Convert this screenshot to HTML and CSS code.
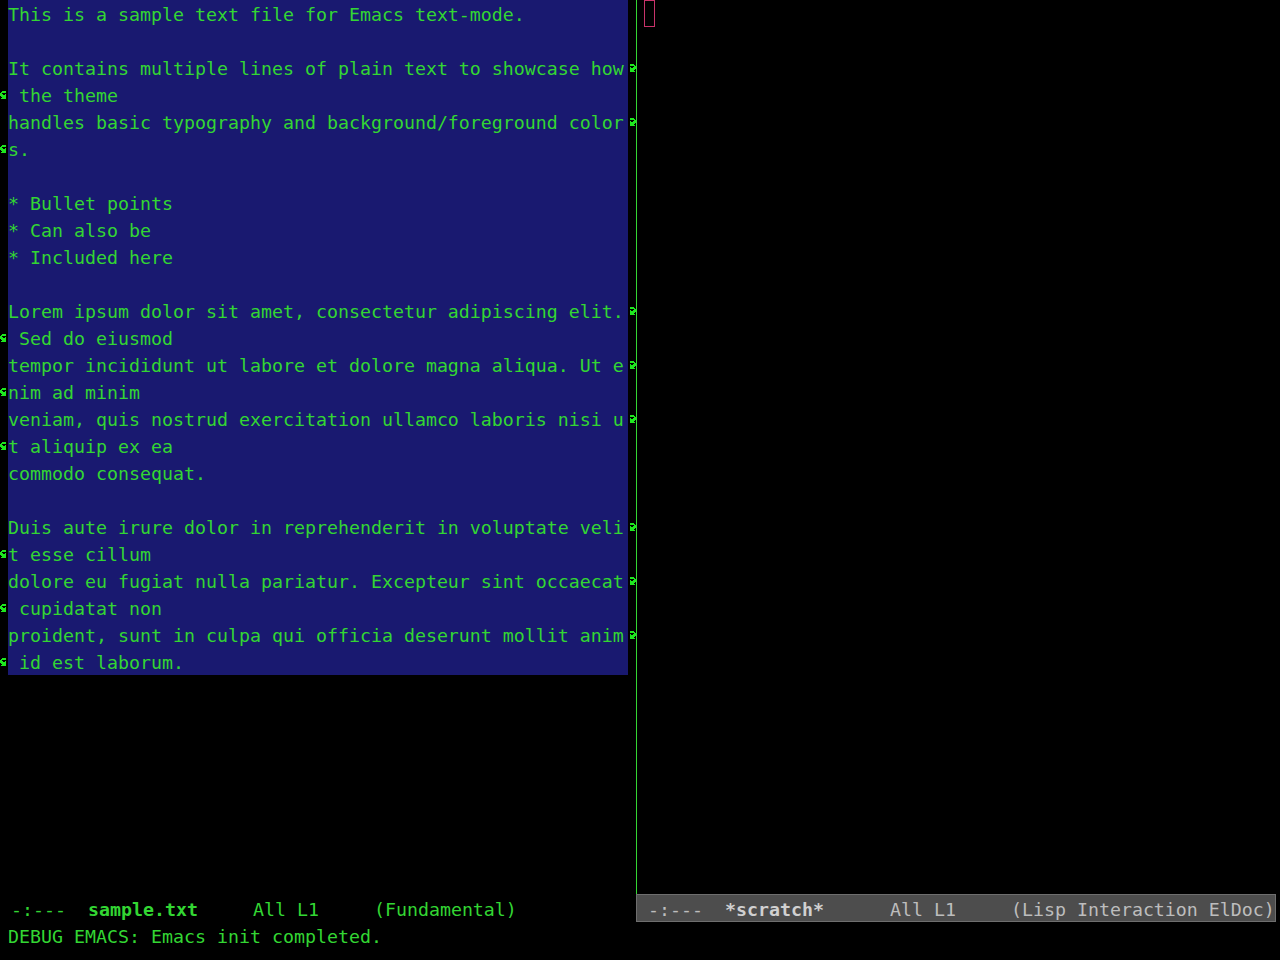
FILE: index.html
```html
<!DOCTYPE html>
<html>
<head>
<meta charset="utf-8">
<title>Emacs</title>
<link rel="stylesheet" href="styles.css">
</head>
<body>
<div class="frame">
  <div class="windows">
    <div class="win win-left">
      <div class="body">
        <div class="row"><span class="f"></span><span class="t">This is a sample text file for Emacs text-mode.</span><span class="f"></span></div>
        <div class="row"><span class="f"></span><span class="t"></span><span class="f"></span></div>
        <div class="row"><span class="f"></span><span class="t">It contains multiple lines of plain text to showcase how</span><span class="f fr"><svg width="8" height="8" viewBox="0 0 8 8"><path class="arrow" d="M2 0h4v1H2zM2 1h5v1H2zM6 2h2v1H6zM2 3h1v1H2zM5 3h3v1H5zM2 4h6v1H2zM2 5h5v1H2zM2 6h4v1H2zM2 7h5v1H2z"/></svg></span></div>
        <div class="row"><span class="f fl"><svg width="8" height="8" viewBox="0 0 8 8"><path class="arrow" d="M2 0h4v1H2zM1 1h5v1H1zM0 2h2v1H0zM0 3h3v1H0zM5 3h1v1H5zM0 4h6v1H0zM1 5h5v1H1zM2 6h4v1H2zM1 7h5v1H1z"/></svg></span><span class="t"> the theme</span><span class="f"></span></div>
        <div class="row"><span class="f"></span><span class="t">handles basic typography and background/foreground color</span><span class="f fr"><svg width="8" height="8" viewBox="0 0 8 8"><path class="arrow" d="M2 0h4v1H2zM2 1h5v1H2zM6 2h2v1H6zM2 3h1v1H2zM5 3h3v1H5zM2 4h6v1H2zM2 5h5v1H2zM2 6h4v1H2zM2 7h5v1H2z"/></svg></span></div>
        <div class="row"><span class="f fl"><svg width="8" height="8" viewBox="0 0 8 8"><path class="arrow" d="M2 0h4v1H2zM1 1h5v1H1zM0 2h2v1H0zM0 3h3v1H0zM5 3h1v1H5zM0 4h6v1H0zM1 5h5v1H1zM2 6h4v1H2zM1 7h5v1H1z"/></svg></span><span class="t">s.</span><span class="f"></span></div>
        <div class="row"><span class="f"></span><span class="t"></span><span class="f"></span></div>
        <div class="row"><span class="f"></span><span class="t">* Bullet points</span><span class="f"></span></div>
        <div class="row"><span class="f"></span><span class="t">* Can also be</span><span class="f"></span></div>
        <div class="row"><span class="f"></span><span class="t">* Included here</span><span class="f"></span></div>
        <div class="row"><span class="f"></span><span class="t"></span><span class="f"></span></div>
        <div class="row"><span class="f"></span><span class="t">Lorem ipsum dolor sit amet, consectetur adipiscing elit.</span><span class="f fr"><svg width="8" height="8" viewBox="0 0 8 8"><path class="arrow" d="M2 0h4v1H2zM2 1h5v1H2zM6 2h2v1H6zM2 3h1v1H2zM5 3h3v1H5zM2 4h6v1H2zM2 5h5v1H2zM2 6h4v1H2zM2 7h5v1H2z"/></svg></span></div>
        <div class="row"><span class="f fl"><svg width="8" height="8" viewBox="0 0 8 8"><path class="arrow" d="M2 0h4v1H2zM1 1h5v1H1zM0 2h2v1H0zM0 3h3v1H0zM5 3h1v1H5zM0 4h6v1H0zM1 5h5v1H1zM2 6h4v1H2zM1 7h5v1H1z"/></svg></span><span class="t"> Sed do eiusmod</span><span class="f"></span></div>
        <div class="row"><span class="f"></span><span class="t">tempor incididunt ut labore et dolore magna aliqua. Ut e</span><span class="f fr"><svg width="8" height="8" viewBox="0 0 8 8"><path class="arrow" d="M2 0h4v1H2zM2 1h5v1H2zM6 2h2v1H6zM2 3h1v1H2zM5 3h3v1H5zM2 4h6v1H2zM2 5h5v1H2zM2 6h4v1H2zM2 7h5v1H2z"/></svg></span></div>
        <div class="row"><span class="f fl"><svg width="8" height="8" viewBox="0 0 8 8"><path class="arrow" d="M2 0h4v1H2zM1 1h5v1H1zM0 2h2v1H0zM0 3h3v1H0zM5 3h1v1H5zM0 4h6v1H0zM1 5h5v1H1zM2 6h4v1H2zM1 7h5v1H1z"/></svg></span><span class="t">nim ad minim</span><span class="f"></span></div>
        <div class="row"><span class="f"></span><span class="t">veniam, quis nostrud exercitation ullamco laboris nisi u</span><span class="f fr"><svg width="8" height="8" viewBox="0 0 8 8"><path class="arrow" d="M2 0h4v1H2zM2 1h5v1H2zM6 2h2v1H6zM2 3h1v1H2zM5 3h3v1H5zM2 4h6v1H2zM2 5h5v1H2zM2 6h4v1H2zM2 7h5v1H2z"/></svg></span></div>
        <div class="row"><span class="f fl"><svg width="8" height="8" viewBox="0 0 8 8"><path class="arrow" d="M2 0h4v1H2zM1 1h5v1H1zM0 2h2v1H0zM0 3h3v1H0zM5 3h1v1H5zM0 4h6v1H0zM1 5h5v1H1zM2 6h4v1H2zM1 7h5v1H1z"/></svg></span><span class="t">t aliquip ex ea</span><span class="f"></span></div>
        <div class="row"><span class="f"></span><span class="t">commodo consequat.</span><span class="f"></span></div>
        <div class="row"><span class="f"></span><span class="t"></span><span class="f"></span></div>
        <div class="row"><span class="f"></span><span class="t">Duis aute irure dolor in reprehenderit in voluptate veli</span><span class="f fr"><svg width="8" height="8" viewBox="0 0 8 8"><path class="arrow" d="M2 0h4v1H2zM2 1h5v1H2zM6 2h2v1H6zM2 3h1v1H2zM5 3h3v1H5zM2 4h6v1H2zM2 5h5v1H2zM2 6h4v1H2zM2 7h5v1H2z"/></svg></span></div>
        <div class="row"><span class="f fl"><svg width="8" height="8" viewBox="0 0 8 8"><path class="arrow" d="M2 0h4v1H2zM1 1h5v1H1zM0 2h2v1H0zM0 3h3v1H0zM5 3h1v1H5zM0 4h6v1H0zM1 5h5v1H1zM2 6h4v1H2zM1 7h5v1H1z"/></svg></span><span class="t">t esse cillum</span><span class="f"></span></div>
        <div class="row"><span class="f"></span><span class="t">dolore eu fugiat nulla pariatur. Excepteur sint occaecat</span><span class="f fr"><svg width="8" height="8" viewBox="0 0 8 8"><path class="arrow" d="M2 0h4v1H2zM2 1h5v1H2zM6 2h2v1H6zM2 3h1v1H2zM5 3h3v1H5zM2 4h6v1H2zM2 5h5v1H2zM2 6h4v1H2zM2 7h5v1H2z"/></svg></span></div>
        <div class="row"><span class="f fl"><svg width="8" height="8" viewBox="0 0 8 8"><path class="arrow" d="M2 0h4v1H2zM1 1h5v1H1zM0 2h2v1H0zM0 3h3v1H0zM5 3h1v1H5zM0 4h6v1H0zM1 5h5v1H1zM2 6h4v1H2zM1 7h5v1H1z"/></svg></span><span class="t"> cupidatat non</span><span class="f"></span></div>
        <div class="row"><span class="f"></span><span class="t">proident, sunt in culpa qui officia deserunt mollit anim</span><span class="f fr"><svg width="8" height="8" viewBox="0 0 8 8"><path class="arrow" d="M2 0h4v1H2zM2 1h5v1H2zM6 2h2v1H6zM2 3h1v1H2zM5 3h3v1H5zM2 4h6v1H2zM2 5h5v1H2zM2 6h4v1H2zM2 7h5v1H2z"/></svg></span></div>
        <div class="row"><span class="f fl"><svg width="8" height="8" viewBox="0 0 8 8"><path class="arrow" d="M2 0h4v1H2zM1 1h5v1H1zM0 2h2v1H0zM0 3h3v1H0zM5 3h1v1H5zM0 4h6v1H0zM1 5h5v1H1zM2 6h4v1H2zM1 7h5v1H1z"/></svg></span><span class="t"> id est laborum.</span><span class="f"></span></div>
      </div>
      <div class="modeline ml-active"> -:---  <b>sample.txt</b>     All L1     (Fundamental)</div>
    </div>
    <div class="win win-right">
      <div class="body">
        <div class="line"><span class="cursor"></span></div>
      </div>
      <div class="modeline ml-inactive"> -:---  <b>*scratch*</b>      All L1     (Lisp Interaction ElDoc)</div>
    </div>
  </div>
  <div class="echo">DEBUG EMACS: Emacs init completed.</div>
</div>
</body>
</html>
```

FILE: styles.css
```css
html, body {
  margin: 0;
  padding: 0;
  background: #000000;
}

body {
  width: 1280px;
  height: 960px;
  overflow: hidden;
  font-family: "DejaVu Sans Mono", monospace;
  font-size: 18.27px;
  color: #33d633;
}

.frame {
  display: flex;
  flex-direction: column;
  height: 960px;
}

.windows {
  display: flex;
  height: 922px;
}

.win {
  display: flex;
  flex-direction: column;
}

.win-left {
  width: 636px;
}

.win-right {
  flex: 1;
}

.body {
  flex: 1;
  min-height: 0;
}

.win-right .body {
  border-left: 1px solid #33d633;
  padding-left: 7px;
}

.row {
  display: grid;
  grid-template-columns: 8px 620px 8px;
  height: 27px;
}

.t {
  background: #191970;
  white-space: pre;
  line-height: 27px;
  height: 27px;
  box-sizing: border-box;
  padding-top: 1px;
  overflow: hidden;
}

.f {
  display: flex;
  align-items: center;
}

.f svg {
  display: block;
  shape-rendering: crispEdges;
}

.arrow {
  fill: #1ee81e;
}

.line {
  height: 27px;
}

.cursor {
  display: block;
  width: 11px;
  height: 27px;
  box-sizing: border-box;
  border: 1px solid #c8336a;
}

.modeline {
  height: 28px;
  box-sizing: border-box;
  border: 1px solid transparent;
  padding-top: 2px;
  line-height: 26px;
  white-space: pre;
  overflow: hidden;
}

.modeline b {
  font-weight: bold;
}

.ml-active {
  border-left: 0;
  color: #33d633;
}

.ml-inactive {
  background: #4d4d4d;
  border-color: #6e6e6e;
  color: #bdbdbd;
  margin-right: 6px;
}

.ml-inactive b {
  color: #d0d0d0;
}

.echo {
  height: 27px;
  box-sizing: border-box;
  padding-top: 1px;
  line-height: 27px;
  padding-left: 8px;
  white-space: pre;
  overflow: hidden;
}
```
